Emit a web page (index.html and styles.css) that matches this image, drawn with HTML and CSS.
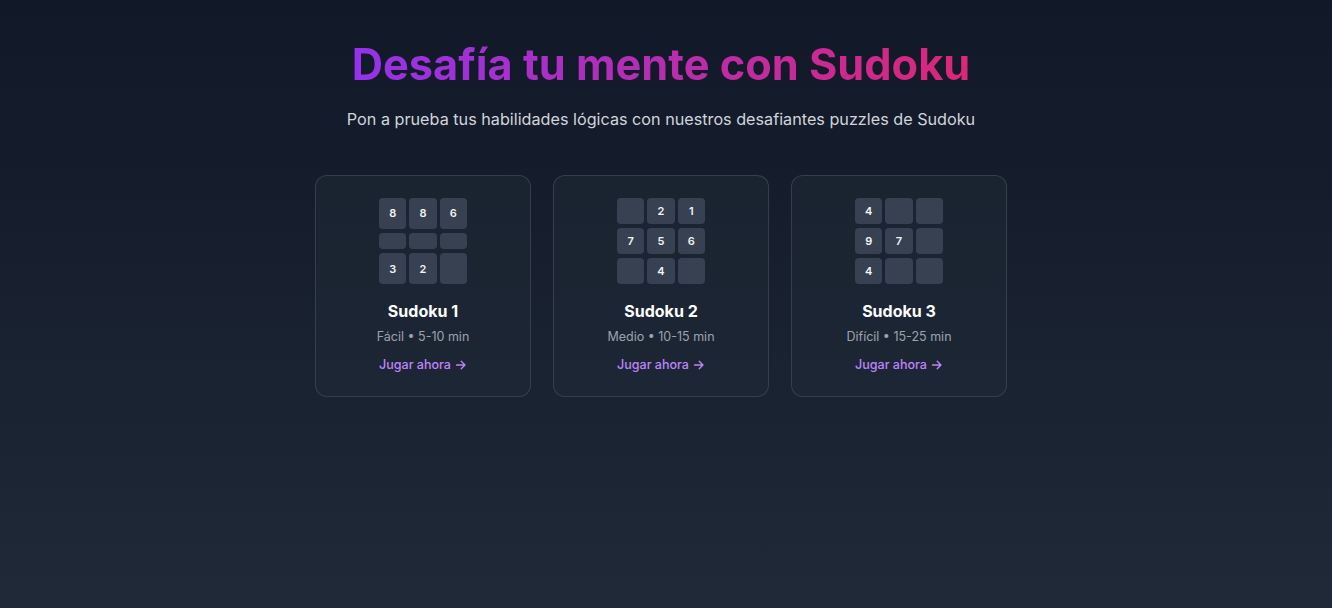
FILE: index.html
```html
<!DOCTYPE html>
<html lang="es">
<head>
<meta charset="utf-8">
<title>Sudoku</title>
<link rel="stylesheet" href="styles.css">
</head>
<body>
<main class="page">
  <h1 class="title">Desafía tu mente con Sudoku</h1>
  <p class="subtitle">Pon a prueba tus habilidades lógicas con nuestros desafiantes puzzles de Sudoku</p>
  <section class="cards">
    <article class="card">
      <div class="grid">
        <div class="cell">8</div><div class="cell">8</div><div class="cell">6</div>
        <div class="cell"></div><div class="cell"></div><div class="cell"></div>
        <div class="cell">3</div><div class="cell">2</div><div class="cell"></div>
      </div>
      <h2 class="card-title">Sudoku 1</h2>
      <p class="meta">Fácil • 5-10 min</p>
      <a class="play" href="#">Jugar ahora <svg class="arrow" viewBox="0 0 12 12" width="12" height="12"><path d="M1.5 6h8.5M6.2 2.2 10 6l-3.8 3.8" fill="none" stroke="currentColor" stroke-width="1.3" stroke-linecap="round" stroke-linejoin="round"/></svg></a>
    </article>
    <article class="card">
      <div class="grid">
        <div class="cell"></div><div class="cell">2</div><div class="cell">1</div>
        <div class="cell">7</div><div class="cell">5</div><div class="cell">6</div>
        <div class="cell"></div><div class="cell">4</div><div class="cell"></div>
      </div>
      <h2 class="card-title">Sudoku 2</h2>
      <p class="meta">Medio • 10-15 min</p>
      <a class="play" href="#">Jugar ahora <svg class="arrow" viewBox="0 0 12 12" width="12" height="12"><path d="M1.5 6h8.5M6.2 2.2 10 6l-3.8 3.8" fill="none" stroke="currentColor" stroke-width="1.3" stroke-linecap="round" stroke-linejoin="round"/></svg></a>
    </article>
    <article class="card">
      <div class="grid">
        <div class="cell">4</div><div class="cell"></div><div class="cell"></div>
        <div class="cell">9</div><div class="cell">7</div><div class="cell"></div>
        <div class="cell">4</div><div class="cell"></div><div class="cell"></div>
      </div>
      <h2 class="card-title">Sudoku 3</h2>
      <p class="meta">Difícil • 15-25 min</p>
      <a class="play" href="#">Jugar ahora <svg class="arrow" viewBox="0 0 12 12" width="12" height="12"><path d="M1.5 6h8.5M6.2 2.2 10 6l-3.8 3.8" fill="none" stroke="currentColor" stroke-width="1.3" stroke-linecap="round" stroke-linejoin="round"/></svg></a>
    </article>
  </section>
</main>
</body>
</html>
```

FILE: styles.css
```css
* { box-sizing: border-box; }
html, body { height: 100%; }
body {
  margin: 0;
  min-height: 608px;
  background: linear-gradient(180deg, #111827 0%, #1f2937 100%);
  font-family: Inter, "Noto Sans", sans-serif;
  color: #e5e7eb;
  padding-right: 10px;
}
.page {
  display: flex;
  flex-direction: column;
  align-items: center;
  padding-top: 36px;
}
.title {
  margin: 0;
  font-size: 43.3px;
  line-height: 56px;
  font-weight: 700;
  background: linear-gradient(90deg, #9333ea, #db2777);
  -webkit-background-clip: text;
  background-clip: text;
  color: transparent;
}
.subtitle {
  margin: 15px 0 0;
  font-size: 16.2px;
  line-height: 24px;
  color: #d1d5db;
}
.cards {
  margin-top: 44px;
  display: flex;
  gap: 22px;
}
.card {
  width: 216px;
  padding: 22px 0 23px;
  border: 1px solid rgba(75, 85, 99, 0.55);
  border-radius: 12px;
  background: rgba(31, 41, 55, 0.55);
  display: flex;
  flex-direction: column;
  align-items: center;
}
.grid {
  width: 88px;
  height: 86px;
  display: grid;
  grid-template-columns: repeat(3, 1fr);
  gap: 4px 3px;
  margin-bottom: 15px;
}
.cell {
  background: #374151;
  border-radius: 4px;
  display: flex;
  align-items: center;
  justify-content: center;
  font-size: 11px;
  line-height: 14px;
  font-weight: 600;
  color: #f3f4f6;
}
.card-title {
  margin: 0;
  font-size: 16px;
  line-height: 24px;
  font-weight: 700;
  color: #ffffff;
}
.meta {
  margin: 4px 0 0;
  font-size: 12.5px;
  line-height: 20px;
  color: #9ca3af;
}
.play {
  margin-top: 10px;
  font-size: 12.5px;
  line-height: 16px;
  font-weight: 500;
  color: #c084fc;
  text-decoration: none;
  display: inline-flex;
  align-items: center;
  gap: 4px;
}
.arrow { display: block; }
```
